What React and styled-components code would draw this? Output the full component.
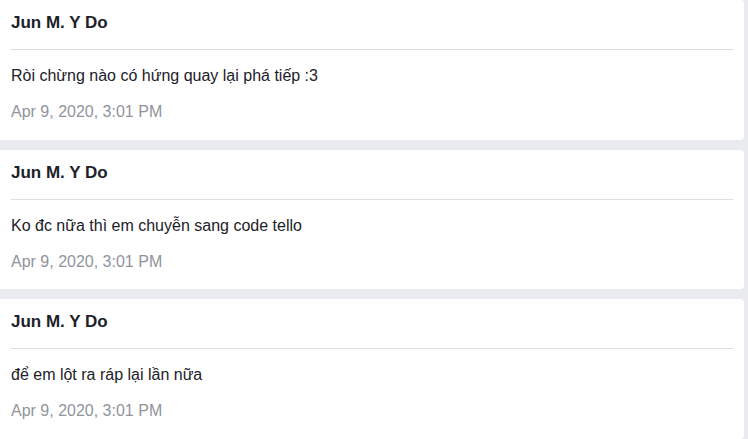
import React from "react";
import styled, { createGlobalStyle } from "styled-components";

const GlobalStyle = createGlobalStyle`
  html, body {
    margin: 0;
    padding: 0;
    background: #e9ebee;
    font-family: "Liberation Sans", Arial, sans-serif;
  }
`;

const List = styled.div`
  display: flex;
  flex-direction: column;
  gap: 10px;
  width: 744px;
`;

const Card = styled.div`
  background: #fff;
  border-radius: 0 4px 4px 0;
  padding: 0 11px;
  height: 139.5px;
  box-sizing: border-box;
`;

const Header = styled.div`
  padding: 13px 0 16px;
  border-bottom: 1px solid #dddfe2;
`;

const Name = styled.div`
  font-size: 17px;
  font-weight: bold;
  line-height: 20px;
  color: #1d2129;
`;

const Body = styled.div`
  padding-top: 16px;
  display: flex;
  flex-direction: column;
  gap: 16px;
`;

const Message = styled.div`
  font-size: 16px;
  line-height: 20px;
  color: #1d2129;
`;

const Time = styled.div`
  font-size: 16px;
  line-height: 20px;
  color: #90949c;
`;

const comments = [
  { name: "Jun M. Y Do", text: "Ròi chừng nào có hứng quay lại phá tiếp :3", time: "Apr 9, 2020, 3:01 PM" },
  { name: "Jun M. Y Do", text: "Ko đc nữa thì em chuyễn sang code tello", time: "Apr 9, 2020, 3:01 PM" },
  { name: "Jun M. Y Do", text: "để em lột ra ráp lại lần nữa", time: "Apr 9, 2020, 3:01 PM" },
];

function Comment({ name, text, time }) {
  return (
    <Card>
      <Header>
        <Name>{name}</Name>
      </Header>
      <Body>
        <Message>{text}</Message>
        <Time>{time}</Time>
      </Body>
    </Card>
  );
}

export default function App() {
  return (
    <>
      <GlobalStyle />
      <List>
        {comments.map((c, i) => (
          <Comment key={i} {...c} />
        ))}
      </List>
    </>
  );
}
